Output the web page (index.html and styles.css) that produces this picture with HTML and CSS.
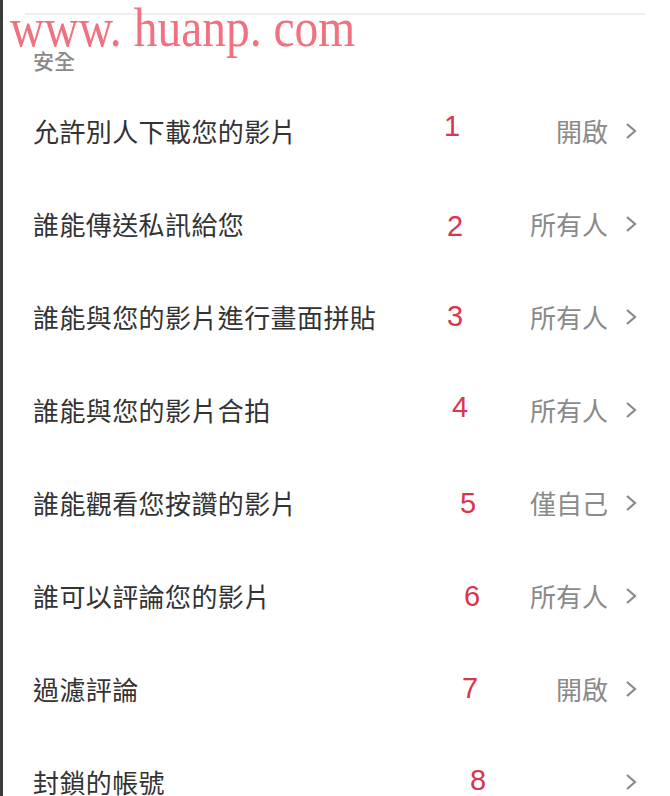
FILE: index.html
```html
<!DOCTYPE html>
<html lang="zh-Hant">
<head>
    <meta charset="UTF-8">
    <meta name="viewport" content="width=device-width, initial-scale=1.0">
    <title>隱私設定</title>
    <link rel="stylesheet" href="styles.css">
</head>
<body>
    <div class="page">
        <div class="topline"></div>
        <div class="watermark">www. huanp. com</div>
        <div class="section-title">安全</div>

        <div class="list">
            <div class="row">
                <span class="label">允許別人下載您的影片</span>
                <span class="mark n1">1</span>
                <span class="value">開啟</span>
                <svg class="chevron" viewBox="0 0 12 18"><polyline points="2,2 10,9 2,16" /></svg>
            </div>
            <div class="row">
                <span class="label">誰能傳送私訊給您</span>
                <span class="mark n2">2</span>
                <span class="value">所有人</span>
                <svg class="chevron" viewBox="0 0 12 18"><polyline points="2,2 10,9 2,16" /></svg>
            </div>
            <div class="row">
                <span class="label">誰能與您的影片進行畫面拼貼</span>
                <span class="mark n3">3</span>
                <span class="value">所有人</span>
                <svg class="chevron" viewBox="0 0 12 18"><polyline points="2,2 10,9 2,16" /></svg>
            </div>
            <div class="row">
                <span class="label">誰能與您的影片合拍</span>
                <span class="mark n4">4</span>
                <span class="value">所有人</span>
                <svg class="chevron" viewBox="0 0 12 18"><polyline points="2,2 10,9 2,16" /></svg>
            </div>
            <div class="row">
                <span class="label">誰能觀看您按讚的影片</span>
                <span class="mark n5">5</span>
                <span class="value">僅自己</span>
                <svg class="chevron" viewBox="0 0 12 18"><polyline points="2,2 10,9 2,16" /></svg>
            </div>
            <div class="row">
                <span class="label">誰可以評論您的影片</span>
                <span class="mark n6">6</span>
                <span class="value">所有人</span>
                <svg class="chevron" viewBox="0 0 12 18"><polyline points="2,2 10,9 2,16" /></svg>
            </div>
            <div class="row">
                <span class="label">過濾評論</span>
                <span class="mark n7">7</span>
                <span class="value">開啟</span>
                <svg class="chevron" viewBox="0 0 12 18"><polyline points="2,2 10,9 2,16" /></svg>
            </div>
            <div class="row">
                <span class="label">封鎖的帳號</span>
                <span class="mark n8">8</span>
                <span class="value"></span>
                <svg class="chevron" viewBox="0 0 12 18"><polyline points="2,2 10,9 2,16" /></svg>
            </div>
        </div>
    </div>
</body>
</html>
```

FILE: styles.css
```css
body {
    margin: 0;
    background-color: #fff;
    font-family: "Noto Sans CJK TC", "Noto Sans", sans-serif;
    overflow: hidden;
}

.page {
    position: relative;
    height: 796px;
    box-sizing: border-box;
    border-left: 3px solid #3a3a3a;
    padding: 13px 33px 0 30px;
}

.topline {
    height: 2px;
    margin: 0 -8px;
    background-color: #eeeeee;
}

/* watermark over the top of the page */
.watermark {
    position: absolute;
    top: 1px;
    left: 7px;
    font-family: "Liberation Serif", serif;
    font-size: 54px;
    line-height: 54px;
    color: #f0717f;
    white-space: nowrap;
    transform: scaleX(0.88);
    transform-origin: left center;
}

.section-title {
    padding-top: 33px;
    line-height: 24px;
    font-size: 21px;
    font-weight: 500;
    color: #8a8a8a;
    margin-bottom: 12px;
}

.row {
    position: relative;
    display: flex;
    align-items: center;
    height: 93px;
}

.label {
    flex: 1;
    font-size: 26px;
    letter-spacing: 0.4px;
    color: #333;
}

.value {
    font-size: 26px;
    color: #8a8a8a;
    margin-right: 17px;
}

.chevron {
    width: 12px;
    height: 18px;
}

.chevron polyline {
    fill: none;
    stroke: #8a8a8a;
    stroke-width: 2.2;
}

.mark {
    position: absolute;
    font-family: "Liberation Sans", sans-serif;
    font-size: 29px;
    color: #d8354f;
    line-height: 1;
}

.n1 { left: 411px; top: 28px; }
.n2 { left: 414px; top: 35px; }
.n3 { left: 414px; top: 32px; }
.n4 { left: 419px; top: 30px; }
.n5 { left: 427px; top: 33px; }
.n6 { left: 431px; top: 33px; }
.n7 { left: 429px; top: 32px; }
.n8 { left: 437px; top: 31px; }
```
